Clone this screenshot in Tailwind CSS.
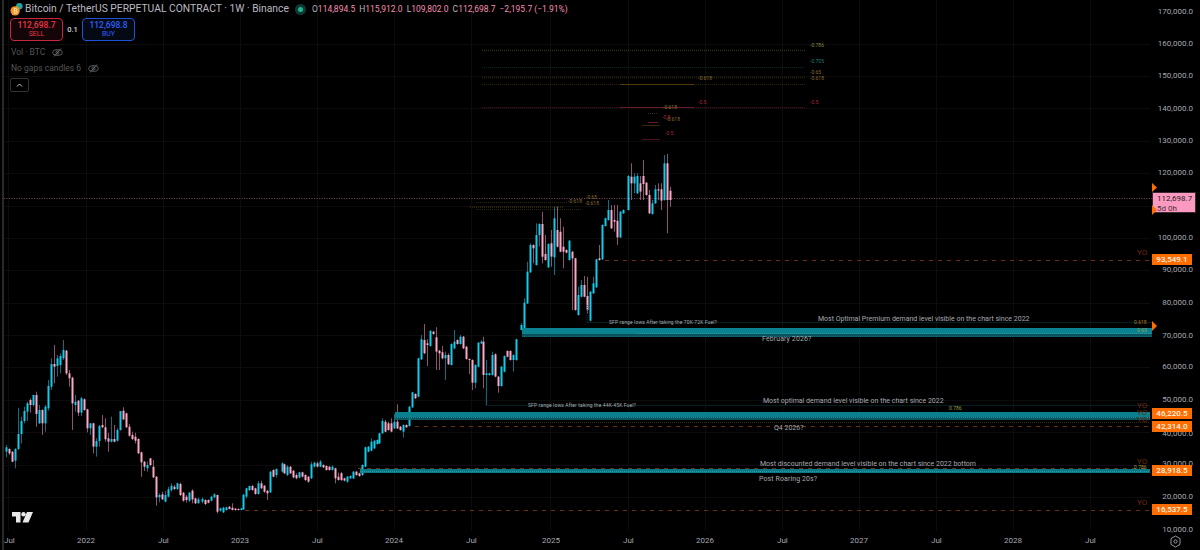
<!doctype html>
<html lang="en">
<head>
<meta charset="utf-8">
<title>Bitcoin / TetherUS chart</title>
<script src="https://cdn.jsdelivr.net/npm/@tailwindcss/browser@4"></script>
</head>
<body class="bg-black">
<div class="relative w-[1200px] h-[550px] overflow-hidden bg-black font-['Roboto',sans-serif]">
  <!-- left sliver -->
  <div class="absolute left-[2px] top-0 w-[2px] h-full bg-[#2a2a2a]"></div>

  <!-- chart drawing -->
  <svg id="chart" class="absolute left-0 top-0" width="1200" height="550" viewBox="0 0 1200 550" fill="none">
    <g stroke="#0c0c0c" stroke-width="1">
      <path d="M4 44.5H1150M4 76.5H1150M4 108.5H1150M4 141.5H1150M4 173.5H1150M4 206.5H1150M4 238.5H1150M4 270.5H1150M4 303.5H1150M4 335.5H1150M4 367.5H1150M4 400.5H1150M4 432.5H1150M4 465.5H1150M4 497.5H1150"/>
      <path d="M8.5 0V530M86.5 0V530M163.5 0V530M240.5 0V530M317.5 0V530M394.5 0V530M471.5 0V530M550.5 0V530M628.5 0V530M705.5 0V530M782.5 0V530M859.5 0V530M936.5 0V530M1013.5 0V530M1090.5 0V530"/>
    </g>
    <!-- fib levels, upper -->
    <g stroke-width="1">
      <path d="M482 50.5H806" stroke="#2e2f15" stroke-width="1.5" stroke-dasharray="1 1"/>
      <path d="M482 67.5H806" stroke="#0c2622" stroke-dasharray="1 1"/>
      <path d="M482 77.5H806" stroke="#2a200c" stroke-width="1.5" stroke-dasharray="1 1"/>
      <path d="M482 84.5H806" stroke="#2e230c" stroke-dasharray="1 1"/>
      <path d="M620 84.5H694" stroke="#4e3a0c"/>
      <path d="M482 107.5H806" stroke="#4a121c" stroke-dasharray="1 1"/>
      <path d="M620 107.5H694" stroke="#681a26"/>
      <path d="M648 113.5H658" stroke="#2e2f15" stroke-dasharray="1 1"/>
      <path d="M648 122.5H658" stroke="#681a26"/>
      <path d="M642 125.5H660" stroke="#33270b"/>
      <path d="M642 139.5H660" stroke="#4a121c"/>
      <path d="M476 202.5H568" stroke="#2e230c" stroke-dasharray="1 1"/>
      <path d="M470 207H563" stroke="#2a200c" stroke-width="2" stroke-dasharray="1 1"/>
      <path d="M476 209.5H581" stroke="#2e230c" stroke-dasharray="1 1"/>
    </g>
    <!-- yearly open levels -->
    <g stroke="#6b300e" stroke-dasharray="4 5">
      <path d="M605 260.5H1150"/>
      <path d="M415 426.5H1150"/>
      <path d="M358 468.5H1150"/>
      <path d="M245 510.5H1150"/>
    </g>
    <!-- current price line -->
    <path d="M4 198.5H1152" stroke="#7c4459" stroke-dasharray="1 1.5"/>
    <g id="candles"></g>
    <!-- demand zones -->
    <rect x="522" y="328" width="630" height="9" fill="#0a5a66" fill-opacity=".9"/>
    <rect x="522" y="328" width="630" height="6" fill="#0b8795" fill-opacity=".9"/>
    <path d="M638 333.5H1152" stroke="#2b98a4" stroke-dasharray="1 1"/>
    <path d="M522 336.5H1152" stroke="#0f6c78" stroke-dasharray="1 1"/>
    <path d="M587 305V322.5H1152" stroke="#0d3a42" stroke-dasharray="1 1"/>
    <rect x="395" y="412" width="755" height="8" fill="#0a6674" fill-opacity=".85"/>
    <rect x="395" y="412" width="755" height="5" fill="#0b8795" fill-opacity=".85"/>
    <path d="M395 417.5H1150" stroke="#238b96" stroke-dasharray="1 1"/>
    <path d="M486 395V405.5H1150" stroke="#0d3a42" stroke-dasharray="1 1"/>
    <path d="M482 422.5H1150" stroke="#33270b" stroke-dasharray="1 1"/>
    <rect x="360" y="469" width="790" height="4" fill="#0b8795" fill-opacity=".9"/>
    <path d="M360 471.5H1150" stroke="#2b98a4" stroke-dasharray="1 1"/>
    <!-- axis markers -->
    <path d="M1152 183V192L1157 187.5Z" fill="#ff6d00"/>
    <path d="M1152 321V331L1157 326Z" fill="#ff6d00"/>
  </svg>

  <!-- legend -->
  <div class="absolute left-[10px] top-[1px] flex flex-col items-start">
    <div class="flex items-center h-[16px] whitespace-nowrap">
      <svg width="14" height="14" viewBox="0 0 15 15" class="mr-[1px] shrink-0">
        <circle cx="10" cy="4.5" r="3.5" fill="#26a69a"/>
        <circle cx="5.5" cy="9.5" r="5" fill="#f7931a"/>
        <path d="M4.5 7V12M4.5 7H6.3Q7.4 7 7.4 8.2T6.3 9.5H4.5M6.3 9.5Q7.6 9.5 7.6 10.8T6.3 12H4.5" stroke="#fff" stroke-width=".7" fill="none"/>
      </svg>
      <span class="text-[10.3px] leading-none text-[#b8bac2] w-[270px]">Bitcoin / TetherUS PERPETUAL CONTRACT · 1W · Binance</span>
      <span class="relative flex items-center justify-center w-[11px] h-[11px] rounded-full bg-[#0d3b33]"><span class="w-[5px] h-[5px] rounded-full bg-[#1fb58f]"></span></span>
      <span class="ml-[6px] flex gap-[4px] text-[8.5px] leading-none text-[#f48fb1]">
        <span><span class="text-[#b2b5be]">O</span>114,894.5</span>
        <span><span class="text-[#b2b5be]">H</span>115,912.0</span>
        <span><span class="text-[#b2b5be]">L</span>109,802.0</span>
        <span><span class="text-[#b2b5be]">C</span>112,698.7</span>
        <span>−2,195.7 (−1.91%)</span>
      </span>
    </div>
    <div class="flex items-center mt-[1px]">
      <div class="w-[53px] h-[23px] rounded-[4px] border border-[#c8283c] bg-[#140608] flex flex-col items-center justify-center">
        <span class="text-[8.5px] leading-[10px] font-medium text-[#ef3347]">112,698.7</span>
        <span class="text-[7px] leading-[9px] text-[#ef3347]">SELL</span>
      </div>
      <span class="w-[19px] text-center text-[7.5px] font-medium text-[#d1d4dc]">0.1</span>
      <div class="w-[53px] h-[23px] rounded-[4px] border border-[#1e53d8] bg-[#050914] flex flex-col items-center justify-center">
        <span class="text-[8.5px] leading-[10px] font-medium text-[#2962ff]">112,698.8</span>
        <span class="text-[7px] leading-[9px] text-[#2962ff]">BUY</span>
      </div>
    </div>
    <div class="flex items-center gap-[7px] h-[15px] mt-[4px] ml-[1px]">
      <span class="text-[8.5px] leading-none text-[#565656]">Vol · BTC</span>
      <svg width="11" height="9" viewBox="0 0 11 9" fill="none" stroke="#777"><ellipse cx="5.5" cy="4.5" rx="4.8" ry="2.8" stroke-width=".8"/><circle cx="5.5" cy="4.5" r="1.5" stroke-width=".8"/><path d="M9 .5 2 8.5" stroke-width=".8"/></svg>
    </div>
    <div class="flex items-center gap-[7px] h-[15px] mt-[1px] ml-[1px]">
      <span class="text-[8.5px] leading-none text-[#565656]">No gaps candles 6</span>
      <svg width="11" height="9" viewBox="0 0 11 9" fill="none" stroke="#777"><ellipse cx="5.5" cy="4.5" rx="4.8" ry="2.8" stroke-width=".8"/><circle cx="5.5" cy="4.5" r="1.5" stroke-width=".8"/><path d="M9 .5 2 8.5" stroke-width=".8"/></svg>
    </div>
    <div class="mt-[2px] w-[19px] h-[14px] rounded-[2px] border border-[#333] flex items-center justify-center">
      <svg width="7" height="5" viewBox="0 0 7 5" fill="none" stroke="#c8c8c8" stroke-width="1"><path d="M1 3.5 3.5 1 6 3.5"/></svg>
    </div>
  </div>

  <!-- fib labels -->
  <div class="text-[5px] leading-none whitespace-nowrap">
    <span class="absolute left-[810px] top-[43px] text-[#8a8a4a]">-0.786</span>
    <span class="absolute left-[810px] top-[59px] text-[#2a7a6e]">-0.705</span>
    <span class="absolute left-[810px] top-[70px] text-[#8a6d3a]">-0.65</span>
    <span class="absolute left-[810px] top-[76px] text-[#8a6d3a]">-0.618</span>
    <span class="absolute left-[698px] top-[76px] text-[#8a6d3a]">-0.618</span>
    <span class="absolute left-[698px] top-[100px] text-[#a8283c]">-0.5</span>
    <span class="absolute left-[810px] top-[100px] text-[#a8283c]">-0.5</span>
    <span class="absolute left-[663px] top-[105px] text-[#8a6d3a]">-0.618</span>
    <span class="absolute left-[662px] top-[115px] text-[#a8283c]">-0.5</span>
    <span class="absolute left-[666px] top-[117px] text-[#8a6d3a]">-0.618</span>
    <span class="absolute left-[665px] top-[131px] text-[#a8283c]">-0.5</span>
    <span class="absolute left-[586px] top-[195px] text-[#8a6d3a]">-0.65</span>
    <span class="absolute left-[585px] top-[201px] text-[#8a6d3a]">-0.618</span>
    <span class="absolute left-[568px] top-[199px] text-[#8a6d3a]">-0.618</span>
    <span class="absolute left-[1134px] top-[320px] text-[#b07a20]">0.618</span>
    <span class="absolute left-[1137px] top-[328px] text-[#9c9a50]">0.65</span>
    <span class="absolute left-[949px] top-[406px] text-[#9c9a50]">0.786</span>
    <span class="absolute left-[1134px] top-[465px] text-[#9c9a50]">0.786</span>
  </div>

  <!-- annotations -->
  <div class="leading-none whitespace-nowrap text-[#a8aab0]">
    <span class="absolute left-[818px] top-[316px] text-[7px]">Most Optimal Premium demand level visible on the chart since 2022</span>
    <span class="absolute left-[609px] top-[320px] text-[5px] tracking-[0.12px]">SFP range lows After taking the 70K-72K Fuel?</span>
    <span class="absolute left-[762px] top-[336px] text-[7px] tracking-[0.1px]">February 2026?</span>
    <span class="absolute left-[763px] top-[398px] text-[7px]">Most optimal demand level visible on the chart since 2022</span>
    <span class="absolute left-[528px] top-[403px] text-[5px] tracking-[0.12px]">SFP range lows After taking the 44K-45K Fuel?</span>
    <span class="absolute left-[774px] top-[425px] text-[7px]">Q4 2026?</span>
    <span class="absolute left-[760px] top-[461px] text-[7px]">Most discounted demand level visible on the chart since 2022 bottom</span>
    <span class="absolute left-[759px] top-[476px] text-[7px] tracking-[0.1px]">Post Roaring 20s?</span>
  </div>

  <!-- YO labels -->
  <div class="text-[8px] leading-none text-[#6e2c0a]">
    <span class="absolute left-[1137px] top-[249px]">YO</span>
    <span class="absolute left-[1137px] top-[402px]">YO</span>
    <span class="absolute left-[1137px] top-[409px]">YO</span>
    <span class="absolute left-[1137px] top-[416px]">YO</span>
    <span class="absolute left-[1137px] top-[458px]">YO</span>
    <span class="absolute left-[1137px] top-[499px]">YO</span>
  </div>

  <!-- price scale -->
  <div class="text-[8px] leading-none text-[#a5a8b0] whitespace-nowrap">
    <span class="absolute right-[7px] top-[8px]">170,000.0</span>
    <span class="absolute right-[7px] top-[40px]">160,000.0</span>
    <span class="absolute right-[7px] top-[72px]">150,000.0</span>
    <span class="absolute right-[7px] top-[105px]">140,000.0</span>
    <span class="absolute right-[7px] top-[137px]">130,000.0</span>
    <span class="absolute right-[7px] top-[169px]">120,000.0</span>
    <span class="absolute right-[7px] top-[234px]">100,000.0</span>
    <span class="absolute right-[7px] top-[266px]">90,000.0</span>
    <span class="absolute right-[7px] top-[299px]">80,000.0</span>
    <span class="absolute right-[7px] top-[332px]">70,000.0</span>
    <span class="absolute right-[7px] top-[363px]">60,000.0</span>
    <span class="absolute right-[7px] top-[396px]">50,000.0</span>
    <span class="absolute right-[7px] top-[430px]">40,000.0</span>
    <span class="absolute right-[7px] top-[460px]">30,000.0</span>
    <span class="absolute right-[7px] top-[493px]">20,000.0</span>
    <span class="absolute right-[7px] top-[526px]">10,000.0</span>
  </div>

  <!-- price tags -->
  <div class="absolute left-[1152px] top-[192px] w-[44px] h-[21px] bg-[#fb99c1] border border-[#3a2a30] text-[#2a1a20] text-[8px] leading-[9.5px] pl-[4px] pt-[1px] whitespace-nowrap flex flex-col">
    <span>112,698.7</span><span class="text-[#4a3038]">5d 0h</span>
  </div>
  <svg class="absolute left-[1152px] top-[205px]" width="6" height="10"><path d="M0 0V10L5 5Z" fill="#ff6d00"/></svg>
  <div class="text-[8px] leading-[11px] font-medium text-[#fff3e6] whitespace-nowrap">
    <span class="absolute left-[1152px] top-[254px] w-[40px] h-[11px] bg-[#ff6d00] text-center">93,549.1</span>
    <span class="absolute left-[1152px] top-[408px] w-[40px] h-[11px] bg-[#ff6d00] text-center">46,220.5</span>
    <span class="absolute left-[1152px] top-[421px] w-[40px] h-[11px] bg-[#ff6d00] text-center">42,314.0</span>
    <span class="absolute left-[1152px] top-[465px] w-[40px] h-[11px] bg-[#ff6d00] text-center">28,918.5</span>
    <span class="absolute left-[1152px] top-[504px] w-[40px] h-[11px] bg-[#ff6d00] text-center">16,537.5</span>
  </div>

  <!-- TradingView mark -->
  <svg class="absolute left-[12px] top-[512px]" width="21" height="11" viewBox="0 0 21 11" fill="#e8e8e8">
    <path d="M0 0H8.5V10.5H4V4.5H0Z"/><circle cx="11.5" cy="2.3" r="2.2"/><path d="M15 0H21L16.5 10.5H10.5Z"/>
  </svg>

  <!-- time axis -->
  <div class="text-[8px] leading-none text-[#a5a8b0]">
    <span class="absolute left-[4px] top-[537px]">Jul</span>
    <span class="absolute left-[77px] top-[537px]">2022</span>
    <span class="absolute left-[158px] top-[537px]">Jul</span>
    <span class="absolute left-[231px] top-[537px]">2023</span>
    <span class="absolute left-[312px] top-[537px]">Jul</span>
    <span class="absolute left-[385px] top-[537px]">2024</span>
    <span class="absolute left-[466px] top-[537px]">Jul</span>
    <span class="absolute left-[542px] top-[537px]">2025</span>
    <span class="absolute left-[623px] top-[537px]">Jul</span>
    <span class="absolute left-[696px] top-[537px]">2026</span>
    <span class="absolute left-[777px] top-[537px]">Jul</span>
    <span class="absolute left-[850px] top-[537px]">2027</span>
    <span class="absolute left-[931px] top-[537px]">Jul</span>
    <span class="absolute left-[1004px] top-[537px]">2028</span>
    <span class="absolute left-[1085px] top-[537px]">Jul</span>
  </div>
  <svg class="absolute left-[1169px] top-[535px]" width="13" height="13" viewBox="0 0 13 13" fill="none" stroke="#a5a8b0" stroke-width=".9">
    <path d="M6.5 1 11 3.6V9.4L6.5 12 2 9.4V3.6Z"/><circle cx="6.5" cy="6.5" r="1.6"/>
  </svg>

  <script>
    // [x, up(1)/down(0), bodyTop, bodyBottom, wickTop, wickBottom] in zoomed crop pixels
    var A=[[18,1,322,335,315,352],[27,0,327,340,325,345],[36,0,335,365,333,367],[45,1,327,362,325,385],[54,1,282,327,203,330],[63,1,243,282,230,310],[72,1,213,243,200,250],[81,1,190,215,185,243],[90,0,180,195,175,218],[99,1,165,195,165,200],[108,0,165,222,155,260],[117,1,210,250,195,252],[126,0,210,250,208,285],[135,1,200,250,195,275],[144,1,138,205,120,212],[153,1,72,140,55,150],[162,0,72,80,15,130],[171,1,55,78,45,110],[180,1,48,75,40,100],[189,1,30,55,0,60],[198,0,32,100,30,105],[207,0,100,115,90,140],[216,0,113,190,110,270],[225,1,185,195,165,215],[234,0,182,218,180,228],[243,1,175,218,170,228],[252,0,178,210,175,212],[261,0,208,265,206,277],[270,1,250,265,250,285],[279,0,250,320,248,340],[288,1,303,320,295,350],[297,1,258,303,255,320],[306,0,255,262,225,264],[315,0,262,298,235,305],[324,0,295,305,278,335],[333,1,297,305,230,307],[342,0,297,305,255,307],[351,1,270,302,265,305],[360,1,213,270,213,272],[369,0,212,238,202,240],[378,0,220,262,218,264],[387,0,260,287,252,290],[396,0,285,297,275,300],[405,0,290,302,278,310],[414,0,297,340,295,342],[423,0,337,367,335,410],[432,0,365,380,363,393],[441,1,375,385,365,395],[450,0,355,375,355,378],[459,0,380,412,360,414],[468,0,410,472,408,497],[477,1,465,472,460,487],[486,0,463,478,455,480],[495,1,465,485,453,487],[504,1,448,470,440,472],[513,1,437,450,430,455],[522,0,440,447,435,450],[531,1,430,447,428,450],[540,0,432,465,428,468],[549,0,458,482,456,485],[558,0,470,480,465,488],[567,1,458,482,455,486],[576,0,452,478,448,490],[585,0,475,490,473,492],[594,1,478,490,472,490]];
    var B=[[5,1,537,545,532,550],[14,0,540,552,538,555],[23,0,540,548,538,550],[32,1,530,542,527,544],[41,1,523,532,520,535],[50,0,525,575,524,580],[59,1,565,572,563,575],[68,1,563,577,560,579],[77,1,562,570,560,572],[86,0,560,567,558,568],[95,0,563,570,550,571],[104,0,566,570,564,572],[113,0,567,570,565,571],[122,1,565,570,564,571],[128,1,524,568,522,570],[138,1,505,530,503,535],[147,1,498,510,497,513],[156,0,498,510,495,512],[165,0,505,522,503,524],[174,1,490,522,483,524],[183,0,490,505,482,507],[192,0,497,515,495,518],[201,0,512,520,510,540],[210,1,455,517,453,519],[219,0,450,470,448,472],[228,1,447,465,445,473],[245,1,430,455,427,458],[253,0,433,460,431,462],[262,1,440,465,435,468],[271,0,440,460,438,462],[280,0,452,472,450,475],[289,0,465,475,460,478],[298,1,457,473,455,475],[307,0,457,470,455,472],[316,0,465,480,463,483],[325,0,470,485,468,488],[334,1,433,475,425,477],[343,1,428,440,425,442],[352,0,430,440,425,442],[361,1,425,440,420,442],[370,0,435,442,433,444],[379,0,438,450,436,452],[388,0,440,450,438,452],[397,1,440,450,436,452],[405,0,445,475,443,490],[414,0,470,480,458,482],[423,0,460,480,456,483],[432,0,475,482,473,484],[441,1,470,485,468,488],[450,1,468,475,466,477],[459,1,455,475,453,477],[468,0,455,465,453,467],[477,0,460,468,458,470],[486,1,435,465,433,468],[495,1,382,440,380,442],[503,1,380,395,378,397],[513,1,365,392,355,394],[522,1,362,385,360,387],[531,1,360,372,358,374],[537,1,340,370,338,372],[546,1,303,340,295,342],[555,0,305,335,300,337],[564,0,310,330,305,332],[573,0,310,335,295,337],[582,1,305,325,283,327],[591,0,305,325,253,327],[600,0,320,330,318,332],[609,1,315,335,313,353],[618,0,315,322,313,324],[627,1,260,318,258,320],[636,1,217,262,215,264],[645,0,222,235,220,237],[654,1,115,230,113,232],[663,1,58,118,45,120],[672,0,60,100,12,102],[681,0,70,75,58,138],[690,1,33,78,30,80],[699,0,35,42,33,44],[708,0,52,95,22,150],[717,0,92,100,90,150],[726,0,97,115,78,118],[735,1,105,115,95,180],[744,0,105,133,100,135],[753,1,72,135,70,137],[762,1,65,85,30,87],[771,0,60,72,58,74],[780,1,50,72,45,74],[789,0,50,85,48,87],[798,0,80,117,78,119],[807,0,117,120,115,162],[816,0,120,188,118,210],[825,1,135,188,133,205],[834,1,68,140,66,142],[843,1,65,70,60,72],[850,0,65,165,50,205],[859,1,160,165,120,255],[868,1,160,165,158,167],[876,1,105,165,95,167],[885,0,103,170,100,172],[894,0,170,198,168,218],[903,1,140,198,138,200],[912,1,108,155,106,157],[921,0,93,110,91,112],[930,0,93,120,91,122],[939,1,105,120,103,155],[948,1,58,120,56,122]];
    var C=[[33,1,525,540,520,540],[42,1,458,540,445,540],[51,1,365,460,335,462],[60,1,285,367,280,369],[69,0,285,295,283,340],[78,1,255,345,220,347],[87,1,222,255,220,290],[96,0,222,320,185,340],[105,0,312,330,255,332],[114,1,282,352,280,354],[123,0,280,320,240,350],[132,1,205,322,170,375],[141,0,240,290,170,292],[150,0,245,305,205,307],[159,0,290,305,230,355],[168,0,300,308,298,310],[177,1,272,330,270,332],[186,0,305,325,303,480],[195,0,325,480,323,482],[204,1,435,495,410,497],[213,1,405,440,390,442],[222,0,405,440,378,442],[231,0,438,480,380,490],[240,1,425,512,423,514],[249,1,400,430,380,432],[258,1,328,412,326,414],[267,0,325,330,285,332],[276,1,225,328,223,330],[285,1,205,228,203,230],[294,1,180,210,150,212],[303,0,180,235,165,237],[312,0,210,215,165,245],[321,0,212,262,165,285],[330,1,185,262,183,264],[339,1,180,190,178,192],[353,1,78,180,75,182],[362,0,80,100,40,150],[371,1,80,100,70,130],[380,1,78,130,70,132],[389,0,100,125,78,150],[398,0,78,102,30,150],[407,0,98,135,96,137],[416,0,135,190,120,192],[425,1,160,192,150,194],[434,1,118,160,105,162],[443,0,118,122,100,150],[452,0,118,152,100,180],[461,1,40,150,15,152],[470,0,40,150,12,250],[479,0,122,150,110,170]];
    var s='';
    function add(arr,ox,oy){arr.forEach(function(c){
      var x=Math.round(ox+c[0]/3),up=c[1],t=oy+c[2]/3,b=oy+c[3]/3,wt=oy+c[4]/3,wb=oy+c[5]/3;
      s+='<rect x="'+x+'" y="'+wt.toFixed(1)+'" width="1" height="'+(wb-wt).toFixed(1)+'" fill="'+(up?'#0d6f82':'#8c5470')+'"/>';
      s+='<rect x="'+(x-0.5)+'" y="'+t.toFixed(1)+'" width="2" height="'+Math.max(b-t,1).toFixed(1)+'" fill="'+(up?'#12cdea':'#fba8c9')+'"/>';
    });}
    add(A,0,340);add(B,200,320);add(C,510,150);
    document.getElementById('candles').innerHTML=s;
  </script>
</div>
</body>
</html>
